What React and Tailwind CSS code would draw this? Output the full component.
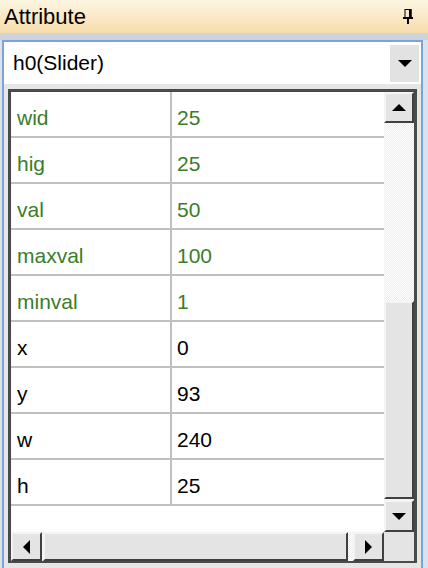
import React from 'react';

const rows = [
  { name: 'wid', value: '25', custom: true },
  { name: 'hig', value: '25', custom: true },
  { name: 'val', value: '50', custom: true },
  { name: 'maxval', value: '100', custom: true },
  { name: 'minval', value: '1', custom: true },
  { name: 'x', value: '0' },
  { name: 'y', value: '93' },
  { name: 'w', value: '240' },
  { name: 'h', value: '25' },
];

const font = { fontFamily: '"Liberation Sans", Arial, sans-serif' };

// classic raised 3D button
const Btn = ({ className = '', children }) => (
  <div className={`flex items-center justify-center bg-[#e4e4e4] border-2 border-t-[#f4f4f4] border-l-[#f4f4f4] border-r-[#404040] border-b-[#404040] ${className}`}>
    {children}
  </div>
);

const Tri = ({ dir }) => {
  const pts = {
    up: '0,7 7,0 14,7',
    down: '0,0 14,0 7,7',
    left: '7,0 7,14 0,7',
    right: '0,0 0,14 7,7',
  }[dir];
  const w = dir === 'up' || dir === 'down' ? 14 : 7;
  const h = dir === 'up' || dir === 'down' ? 7 : 14;
  return (
    <svg width={w} height={h} viewBox={`0 0 ${w} ${h}`}>
      <polygon points={pts} fill="#000" />
    </svg>
  );
};

const checker = 'bg-[repeating-conic-gradient(#ececec_0%_25%,#ffffff_0%_50%)] bg-[length:2px_2px]';

export default function App() {
  return (
    <div className="w-[428px] h-[568px] bg-[#dde1e8] flex flex-col overflow-hidden text-[21px]" style={font}>
      {/* title */}
      <div className="h-[33px] shrink-0 flex items-center justify-between pl-[4px] pr-[14px] bg-gradient-to-b from-[#fdf6e2] to-[#f7dcaa]">
        <span className="text-black text-[22px] leading-none">Attribute</span>
        <svg width="12" height="15" viewBox="0 0 12 15">
          <rect x="3" y="0.5" width="6" height="8" fill="none" stroke="#000" />
          <rect x="7" y="0" width="2.5" height="9" fill="#000" />
          <rect x="1" y="8" width="10" height="2" fill="#000" />
          <rect x="5" y="10" width="2" height="5" fill="#000" />
        </svg>
      </div>
      <div className="h-[7px] shrink-0 bg-[#cdd4de]" />

      {/* panel */}
      <div className="flex-1 ml-[2px] mr-[5px] border-l-[2px] border-r-[2px] border-t-[2px] border-[#7aa3dc] bg-[#e6e6e6] flex flex-col">
        {/* combo */}
        <div className="h-[42px] shrink-0 bg-white flex items-center justify-between pl-[9px] pr-[2px]">
          <span className="text-black">h0(Slider)</span>
          <div className="w-[29px] h-[37px] bg-[#e2e2e2] flex items-center justify-center">
            <Tri dir="down" />
          </div>
        </div>

        {/* grid */}
        <div className="mt-[5px] ml-[4px] mr-[4px] h-[474px] border-[3px] border-[#4a4a4a] border-b-2 bg-white flex flex-col">
          <div className="flex flex-1 min-h-0">
            <div className="flex-1 flex flex-col">
              {rows.map((r) => (
                <div key={r.name} className="h-[46px] shrink-0 flex border-b-2 border-[#c0c0c0]">
                  <div className={`w-[161px] shrink-0 pl-[6px] pt-[10px] border-r-2 border-[#c0c0c0] ${r.custom ? 'text-[#3a7d2a]' : 'text-black'}`}>
                    {r.name}
                  </div>
                  <div className={`flex-1 pl-[5px] pt-[10px] ${r.custom ? 'text-[#3a7d2a]' : 'text-black'}`}>
                    {r.value}
                  </div>
                </div>
              ))}
            </div>
            {/* vertical scrollbar */}
            <div className={`w-[30px] shrink-0 flex flex-col ${checker}`}>
              <Btn className="h-[31px] shrink-0"><Tri dir="up" /></Btn>
              <div className="h-[178px] shrink-0" />
              <Btn className="flex-1" />
              <Btn className="h-[32px] shrink-0 mt-[1px]"><Tri dir="down" /></Btn>
            </div>
          </div>
          {/* horizontal scrollbar */}
          <div className="h-[29px] shrink-0 flex">
            <div className={`flex-1 flex ${checker}`}>
              <Btn className="w-[31px] shrink-0"><Tri dir="left" /></Btn>
              <Btn className="flex-1 mx-[1px]" />
              <Btn className="w-[31px] shrink-0 ml-[4px]"><Tri dir="right" /></Btn>
            </div>
            <div className="w-[30px] shrink-0 bg-[#e4e4e4]" />
          </div>
        </div>
      </div>
    </div>
  );
}
